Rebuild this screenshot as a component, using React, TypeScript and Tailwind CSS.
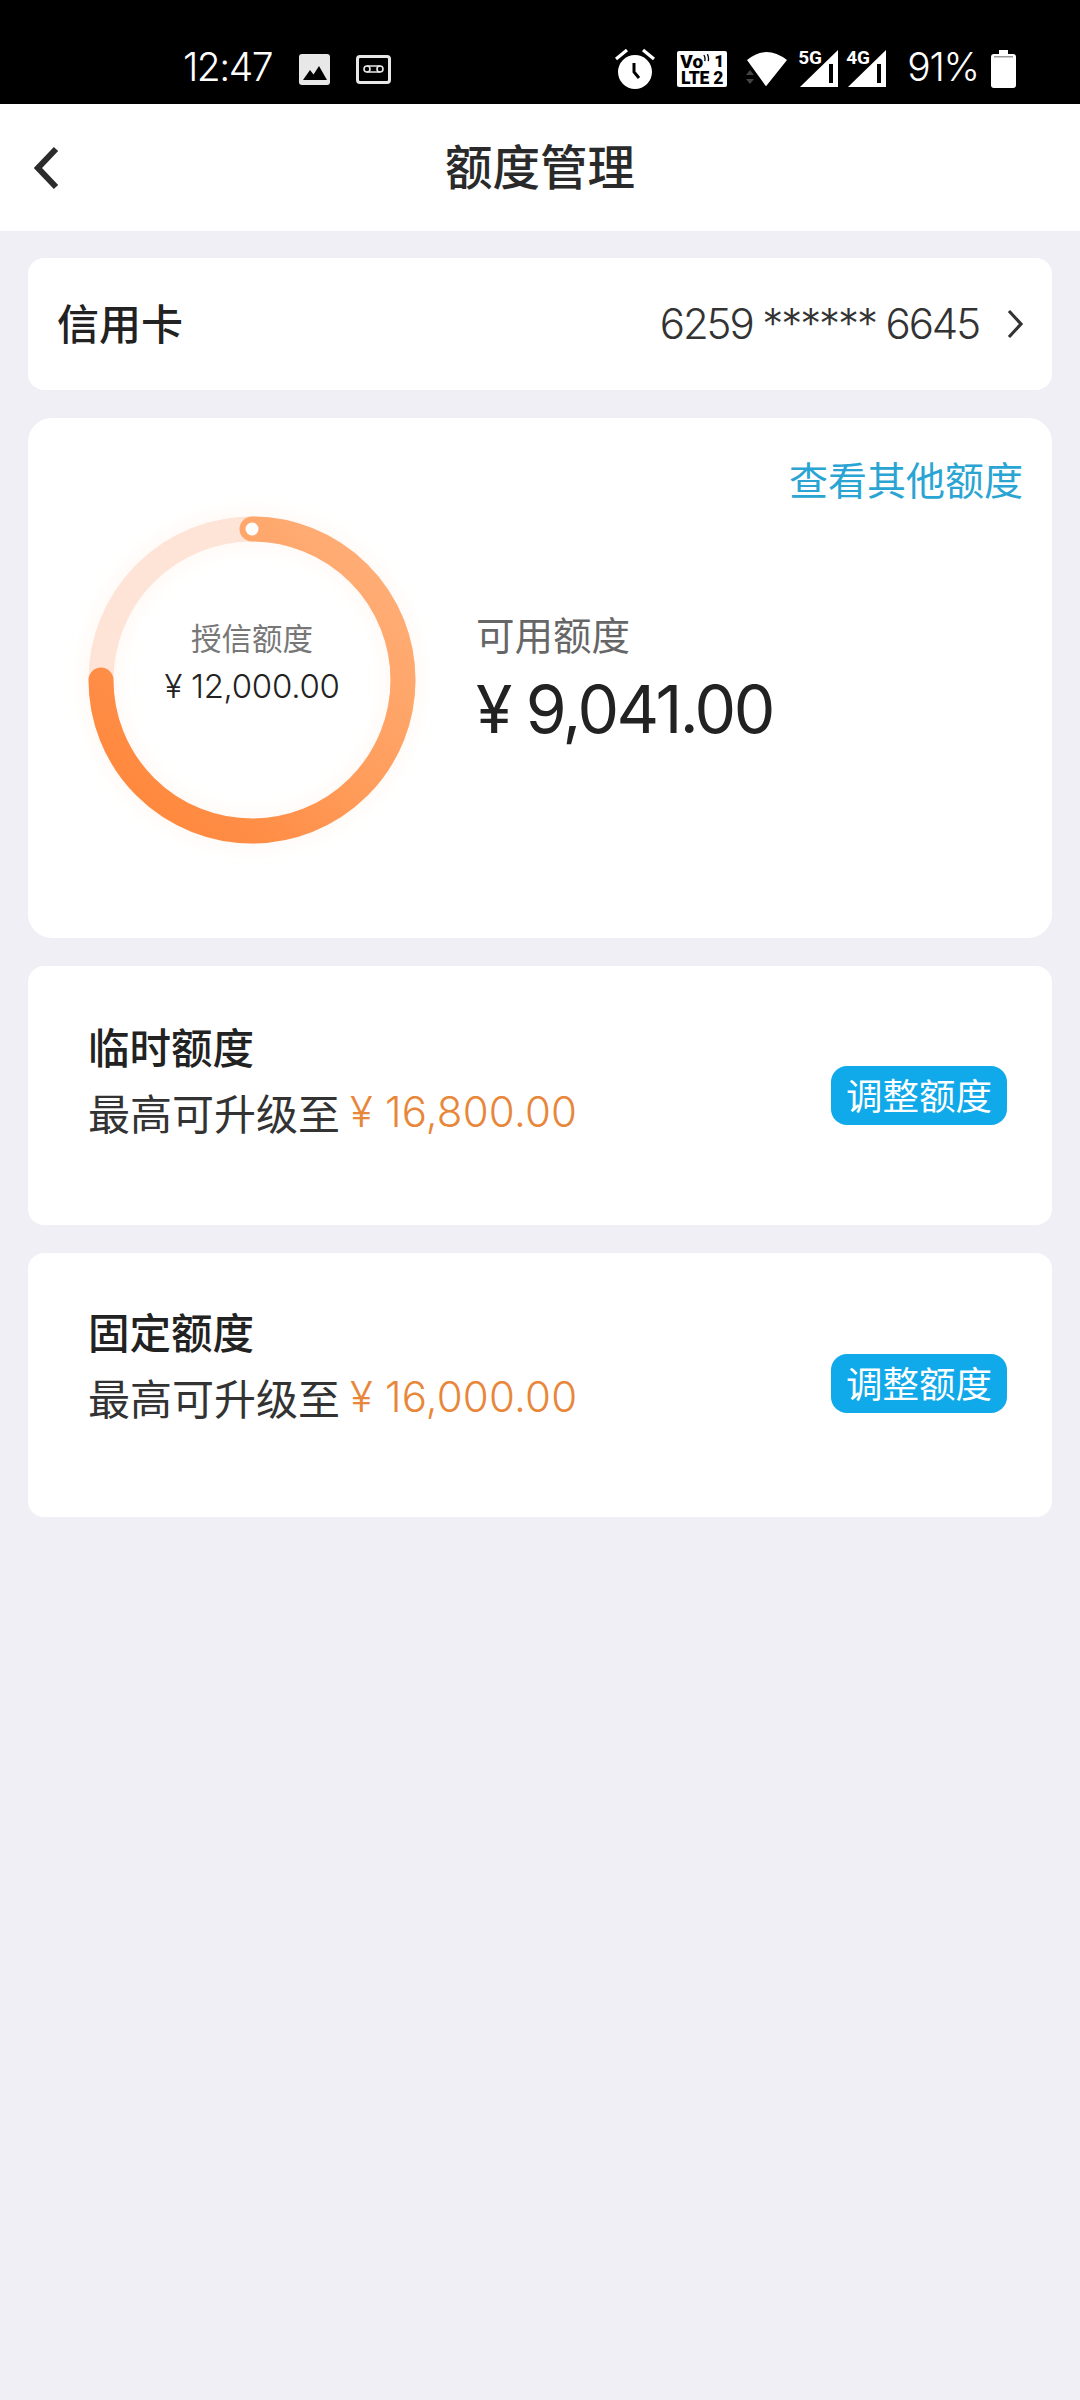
import React from "react";

const cjk = { fontFamily: '"Noto Sans CJK SC", sans-serif' };

function Card({ title, amount, heightClass, titleTop, btnTop }: { title: string; amount: string; heightClass: string; titleTop: string; btnTop: string }) {
  return (
    <div className={`flex justify-between rounded-[16px] bg-white pl-[60px] pr-[45px] ${heightClass}`}>
      <div className={titleTop}>
        <div className="text-[41.5px] font-medium leading-[54px] text-[#222222]">{title}</div>
        <div className="mt-[11px] flex items-center whitespace-nowrap text-[42px] leading-[56px] text-[#333333]">
          最高可升级至
          <span className="ml-[10px] font-['Inter',sans-serif] text-[42px] font-light tracking-[0.2px] text-[#E8873A]">{amount}</span>
        </div>
      </div>
      <div className={`flex h-[59px] w-[176px] items-center justify-center rounded-[16px] bg-[#10A9E9] text-[36.5px] text-white ${btnTop}`}>调整额度</div>
    </div>
  );
}

function Ring() {
  return (
    <svg viewBox="0 0 360 360" className="col-start-1 row-start-1 ml-[-17px] mt-[-17px] h-[360px] w-[360px] overflow-visible">
      <defs>
        <linearGradient id="ringGrad" x1="1" y1="0" x2="0" y2="1">
          <stop offset="0" stopColor="#FFB27E" />
          <stop offset="0.5" stopColor="#FF9C5A" />
          <stop offset="0.75" stopColor="#FF8D46" />
          <stop offset="1" stopColor="#FF8536" />
        </linearGradient>
        <filter id="glow" x="-20%" y="-20%" width="140%" height="140%">
          <feGaussianBlur stdDeviation="10" />
        </filter>
      </defs>
      <circle cx="180" cy="180" r="151" fill="none" stroke="#FFE3D0" strokeOpacity="0.3" strokeWidth="30" filter="url(#glow)" />
      <circle cx="180" cy="180" r="151" fill="none" stroke="#FDE4D6" strokeWidth="25" />
      <path d="M180 29 A151 151 0 1 1 29 180" fill="none" stroke="url(#ringGrad)" strokeWidth="25" strokeLinecap="round" />
      <circle cx="180" cy="29" r="6.5" fill="#FFFFFF" />
    </svg>
  );
}

function Signal({ label, className }: { label: string; className: string }) {
  return (
    <div className={`mb-[1px] grid ${className}`}>
      <svg viewBox="0 0 38 37" className="col-start-1 row-start-1 ml-[2px] h-[37px] w-[38px]">
        <path d="M0 37 L38 0 V37 Z" fill="#fff" />
        <rect x="29" y="14" width="4" height="19" fill="#000" />
      </svg>
      <span className="col-start-1 row-start-1 mt-[-2px] font-['Roboto',sans-serif] text-[19px] font-bold leading-[19px]">{label}</span>
    </div>
  );
}

export default function App() {
  return (
    <div className="flex min-h-[2400px] w-[1080px] flex-col bg-[#EFEFF5]" style={cjk}>
      {/* status bar */}
      <div className="flex h-[104px] items-end bg-black pb-[16px] pl-[183px] text-white">
        <span className="mb-[1px] font-['Inter',sans-serif] text-[39px] font-light leading-[40px] tracking-[-1.5px]">12:47</span>
        <svg viewBox="0 0 31 31" className="mb-[3px] ml-[27px] h-[31px] w-[31px]">
          <rect width="31" height="31" rx="3" fill="#E8E8E8" />
          <path d="M4 26 L11 16 L14.5 20.5 L20 12 L28 26 Z" fill="#000" />
        </svg>
        <svg viewBox="0 0 35 29" className="mb-[4px] ml-[26px] h-[29px] w-[35px]">
          <rect x="1.5" y="1.5" width="32" height="26" rx="2.5" fill="none" stroke="#E8E8E8" strokeWidth="3" />
          <circle cx="11" cy="14" r="3" fill="none" stroke="#E8E8E8" strokeWidth="1.6" />
          <circle cx="24" cy="14" r="3" fill="none" stroke="#E8E8E8" strokeWidth="1.6" />
          <path d="M11 11 H24 M11 17 H24" stroke="#E8E8E8" strokeWidth="1.4" />
        </svg>
        <svg viewBox="0 0 40 41" className="mb-[-1px] ml-[224px] h-[41px] w-[40px]">
          <circle cx="20" cy="24" r="17" fill="#fff" />
          <path d="M19 15 V24 L24 30" fill="none" stroke="#000" strokeWidth="3" />
          <path d="M1 11 L12 2 M28 2 L39 11" stroke="#fff" strokeWidth="3.2" />
        </svg>
        <div className="mb-[1px] ml-[22px] flex h-[36px] w-[50px] flex-col items-center justify-center rounded-[2px] bg-white font-['Roboto',sans-serif] font-black text-black">
          <div className="flex h-[17px] items-center text-[19px] leading-[17px]">
            <span>Vo</span>
            <svg viewBox="0 0 8 10" className="mb-[6px] h-[9px] w-[7px]">
              <path d="M1 1 Q3 4 2 8 M5 0 Q7 4 6 8" fill="none" stroke="#000" strokeWidth="1.5" />
            </svg>
            <span className="ml-[4px] text-[17px]">1</span>
          </div>
          <div className="h-[16px] whitespace-nowrap text-[17.5px] leading-[16px] tracking-[-0.2px]">LTE 2</div>
        </div>
        <svg viewBox="0 0 44 38" className="mb-[1px] ml-[18px] h-[38px] w-[44px]">
          <path d="M2 10 Q21 -6 42 10 L22 35 Q21 37 20 35 Z" fill="#fff" transform="translate(0 1)" />
          <path d="M1 26 L5 21 L9 26 Z M1 30 L9 30 L5 35 Z" fill="#444" />
        </svg>
        <Signal label="5G" className="ml-[9px]" />
        <Signal label="4G" className="ml-[8px]" />
        <span className="mb-[1px] ml-[21px] font-['Inter',sans-serif] text-[39px] font-light leading-[40px] tracking-[-1.2px]">91%</span>
        <svg viewBox="0 0 25 38" className="ml-[12px] h-[38px] w-[25px]">
          <path d="M8 0 H17 V4 H22 Q25 4 25 7 V35 Q25 38 22 38 H3 Q0 38 0 35 V7 Q0 4 3 4 H8 Z" fill="#fff" />
          <rect x="3" y="6" width="19" height="1.5" fill="#999" />
        </svg>
      </div>

      {/* header */}
      <div className="flex h-[127px] items-center bg-white">
        <svg viewBox="0 0 26 44" className="ml-[34px] h-[44px] w-[26px]">
          <path d="M22 3 L4 22 L22 41" fill="none" stroke="#2B2B2B" strokeWidth="6" />
        </svg>
        <div className="mb-[6px] ml-[385px] text-[47.5px] font-medium leading-[60px] text-[#2A2A2A]">额度管理</div>
      </div>

      <div className="flex flex-col px-[28px] pt-[27px]">
        {/* card number */}
        <div className="flex h-[132px] items-center rounded-[16px] bg-white pl-[29px] pr-[28px]">
          <div className="mb-[6px] text-[42px] font-medium text-[#222222]">信用卡</div>
          <div className="ml-auto mb-[1px] font-['Inter',sans-serif] text-[42px] font-light tracking-[-2.1px] text-[#333333]">6259 ****** 6645</div>
          <svg viewBox="0 0 18 30" className="ml-[27px] h-[30px] w-[18px]">
            <path d="M3 2 L15 15 L3 28" fill="none" stroke="#333" strokeWidth="3.2" />
          </svg>
        </div>

        {/* limit */}
        <div className="mt-[28px] h-[520px] rounded-[24px] bg-white">
          <div className="pr-[29px] pt-[32px] text-right text-[39px] leading-[56px] text-[#2AA5D3]">查看其他额度</div>
          <div className="mt-[11px] flex items-start pl-[61px]">
            <div className="grid h-[326px] w-[326px] grid-cols-[326px]">
              <Ring />
              <div className="col-start-1 row-start-1 flex flex-col items-center pt-[100px]">
                <div className="text-[30.5px] leading-[40px] text-[#777777]">授信额度</div>
                <div className="mt-[9px] whitespace-nowrap font-['Inter',sans-serif] text-[33px] font-light leading-[40px] tracking-[-0.3px] text-[#222222]">¥ 12,000.00</div>
              </div>
            </div>
            <div className="ml-[61px] flex flex-col pt-[91px]">
              <div className="text-[38.5px] leading-[50px] text-[#666666]">可用额度</div>
              <div className="mt-[13px] whitespace-nowrap font-['Inter',sans-serif] text-[66px] font-normal leading-[76px] tracking-[-2.5px] text-[#222222]">¥ 9,041.00</div>
            </div>
          </div>
        </div>

        <div className="mt-[28px]">
          <Card title="临时额度" amount="¥ 16,800.00" heightClass="h-[259px]" titleTop="pt-[53px]" btnTop="mt-[100px]" />
        </div>
        <div className="mt-[28px]">
          <Card title="固定额度" amount="¥ 16,000.00" heightClass="h-[264px]" titleTop="pt-[51px]" btnTop="mt-[101px]" />
        </div>
      </div>
    </div>
  );
}
